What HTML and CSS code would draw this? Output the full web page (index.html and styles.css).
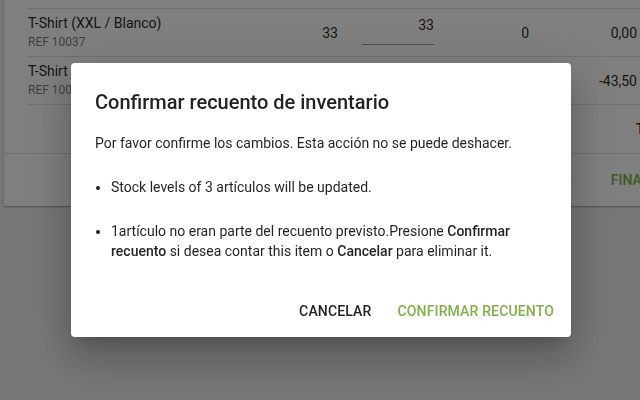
FILE: index.html
```html
<!DOCTYPE html>
<html lang="es">
<head>
<meta charset="utf-8">
<title>Recuento de inventario</title>
<link rel="stylesheet" href="styles.css">
</head>
<body>
<div class="page">
  <div class="card">
    <div class="row">
      <div class="name">
        <div class="title">T-Shirt (XXL / Blanco)</div>
        <div class="ref">REF 10037</div>
      </div>
      <div class="num expected">33</div>
      <div class="count"><span>33</span></div>
      <div class="num diff">0</div>
      <div class="num value">0,00</div>
    </div>
    <div class="row">
      <div class="name">
        <div class="title">T-Shirt (XXL / Negro)</div>
        <div class="ref">REF 10038</div>
      </div>
      <div class="num expected">3</div>
      <div class="count"><span>0</span></div>
      <div class="num diff">-3</div>
      <div class="num value">-43,50</div>
    </div>
    <div class="row total">
      <div class="name"></div>
      <div class="num expected"></div>
      <div class="count blank"></div>
      <div class="num diff"></div>
      <div class="num value"></div>
      <div class="tot">Total</div>
    </div>
    <div class="footer">
      <span class="fbtn grey">GUARDAR</span>
      <span class="fbtn green">FINALIZAR</span>
    </div>
  </div>
</div>

<div class="overlay">
  <div class="dialog" role="dialog">
    <h2 class="dlg-title">Confirmar recuento de inventario</h2>
    <div class="dlg-content">
      <p>Por favor confirme los cambios. Esta acción no se puede deshacer.</p>
      <ul>
        <li>Stock levels of 3 artículos will be updated.</li>
        <li>1artículo no eran parte del recuento previsto.Presione <b>Confirmar recuento</b> si desea contar this item o <b>Cancelar</b> para eliminar it.</li>
      </ul>
    </div>
    <div class="dlg-actions">
      <button class="btn">Cancelar</button>
      <button class="btn primary">Confirmar recuento</button>
    </div>
  </div>
</div>
</body>
</html>
```

FILE: styles.css
```css
* { box-sizing: border-box; }
html, body {
  margin: 0;
  padding: 0;
  width: 640px;
  height: 400px;
  overflow: hidden;
  font-family: Roboto, "Liberation Sans", sans-serif;
  background: #eeeeee;
  color: rgba(0,0,0,0.87);
}
.page {
  padding: 0 0 0 4px;
  margin-top: -40px;
}
.card {
  background: #fff;
  width: 680px;
  padding-top: 48px;
  box-shadow: 0 1px 3px rgba(0,0,0,0.2), 0 1px 1px rgba(0,0,0,0.14);
}
.row {
  display: grid;
  grid-template-columns: 250px 60px 96px 95px 108px auto;
  align-items: center;
  margin-left: 24px;
  height: 48px;
  border-top: 1px solid #e0e0e0;
  font-size: 14px;
}
.row.total { height: 49px; }
.name .title { font-size: 14px; line-height: 20px; color: rgba(0,0,0,0.87); margin-top: -3px; }
.name .ref { font-size: 12px; line-height: 16px; color: rgba(0,0,0,0.54); margin-top: 1px; }
.num { text-align: right; }
.count {
  margin-left: 24px;
  height: 30px;
  border-bottom: 1px solid rgba(0,0,0,0.42);
  text-align: right;
  padding-top: 2px;
  margin-top: -6px;
}
.count.blank { border-bottom: none; }
.tot { font-weight: 500; margin-left: -1px; white-space: nowrap; }
.footer {
  border-top: 1px solid #e0e0e0;
  height: 53px;
  display: flex;
  align-items: center;
  padding-left: 504px;
  gap: 39px;
  font-size: 14px;
  font-weight: 500;
}
.fbtn { white-space: nowrap; }
.fbtn.grey { color: rgba(0,0,0,0.3); }
.fbtn.green { color: #7cb342; }

.overlay {
  position: fixed;
  inset: 0;
  background: rgba(0,0,0,0.5);
  display: flex;
  align-items: center;
  justify-content: center;
}
.dialog {
  width: 500px;
  margin-left: 2px;
  background: #fff;
  border-radius: 4px;
  box-shadow: 0 11px 15px -7px rgba(0,0,0,0.2), 0 24px 38px 3px rgba(0,0,0,0.14), 0 9px 46px 8px rgba(0,0,0,0.12);
}
.dlg-title {
  margin: 0;
  padding: 24px 24px 16px;
  font-size: 20px;
  font-weight: 500;
  line-height: 30px;
  color: rgba(0,0,0,0.87);
}
.dlg-content {
  padding: 0 24px 24px;
  font-size: 14px;
  line-height: 20px;
  color: rgba(0,0,0,0.87);
}
.dlg-content p { margin: 0; }
.dlg-content ul {
  margin: 24px 0 0;
  padding-left: 16px;
}
.dlg-content li + li { margin-top: 24px; }
.dlg-content b { font-weight: 500; }
.dlg-actions {
  display: flex;
  justify-content: flex-end;
  align-items: center;
  padding: 8px 9px 8px 8px;
  gap: 10px;
}
.btn {
  font-family: Roboto, "Liberation Sans", sans-serif;
  font-size: 14px;
  font-weight: 500;
  letter-spacing: 0.15px;
  text-transform: uppercase;
  line-height: 24px;
  padding: 6px 8px;
  border: none;
  background: transparent;
  color: rgba(0,0,0,0.87);
  border-radius: 4px;
}
.btn.primary { color: #7cb342; }
```
